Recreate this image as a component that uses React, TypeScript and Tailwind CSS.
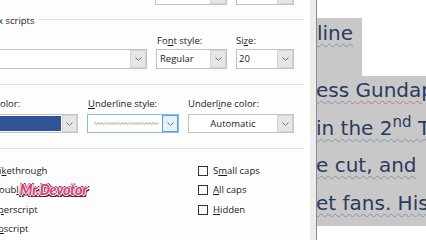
import type { ReactNode } from "react";

const Chevron = () => (
  <svg width="7" height="4" viewBox="0 0 7 4">
    <path d="M0.5 0.5 L3.5 3.5 L6.5 0.5" fill="none" stroke="#707070" strokeWidth="1" />
  </svg>
);

interface ComboProps {
  width: string;
  children?: ReactNode;
  cutLeft?: boolean;
  center?: boolean;
  active?: boolean;
}

function Combo({ width, children, cutLeft, center, active }: ComboProps) {
  return (
    <div
      className={`flex h-full ${width} border ${
        active ? "border-[#8fbbe8]" : "border-[#c2c2c2]"
      } ${cutLeft ? "border-l-0" : ""} bg-white`}
    >
      <div
        className={`flex flex-1 items-center overflow-hidden ${
          center ? "justify-center" : "pl-[2px]"
        }`}
      >
        {children}
      </div>
      <div
        className={`flex w-[16px] items-center justify-center border ${
          active ? "border-[#5a9fe0] bg-[#e5f1fb]" : "border-[#d4d4d4] bg-[#e6e6e6]"
        }`}
      >
        <Chevron />
      </div>
    </div>
  );
}

const U = ({ children }: { children: ReactNode }) => <span className="underline underline-offset-[1px]">{children}</span>;

// the wavy sample in the underline style box
function Wave() {
  let d = "M0 2.5";
  for (let i = 1; i <= 43; i++) d += ` L${i * 1.5} ${i % 2 ? 0.5 : 2.5}`;
  return (
    <svg width="65" height="3" viewBox="0 0 65 3">
      <path d={d} fill="none" stroke="#8a8a8a" strokeWidth="0.7" />
    </svg>
  );
}

function Check({ label }: { label: ReactNode }) {
  return (
    <div className="flex items-center">
      <div className="ml-[1px] h-[10px] w-[10px] border border-[#333]" />
      <span className="ml-[5px]">{label}</span>
    </div>
  );
}

function FontDialog() {
  return (
    <div className="flex w-[310px] shrink-0 flex-col bg-[#fdfdfd] text-[9.5px] leading-[14px] text-[#1b1b1b] font-['Open_Sans','Noto_Sans',sans-serif]">
      {/* latin text row, cut at the top */}
      <div className="-mt-[15px] flex h-[20px] shrink-0">
        <div className="w-[155px]" />
        <Combo width="w-[72px]">
          <span className="pl-[2px]">Bold</span>
        </Combo>
        <div className="w-[9px]" />
        <Combo width="w-[58px]">
          <span className="pl-[1px]">10</span>
        </Combo>
      </div>

      <div className="mt-[9px] flex h-[14px] shrink-0 items-center">
        <span className="-ml-[2px]">x scripts</span>
        <div className="mb-[3px] ml-[4px] mr-[6px] h-px flex-1 bg-[#e2e2e2]" />
      </div>

      <div className="mt-[6px] flex h-[14px] shrink-0">
        <div className="w-[157px]" />
        <div className="w-[79px]">
          Fo<U>n</U>t style:
        </div>
        <div>
          Si<U>z</U>e:
        </div>
      </div>

      <div className="mt-[1px] flex h-[20px] shrink-0">
        <Combo width="w-[147px]" cutLeft />
        <div className="w-[9px]" />
        <Combo width="w-[71px]">
          <span className="pl-[1px]">Regular</span>
        </Combo>
        <div className="w-[9px]" />
        <Combo width="w-[58px]">20</Combo>
      </div>

      <div className="mr-[6px] mt-[15px] h-px shrink-0 bg-[#e2e2e2]" />

      <div className="mt-[12px] flex h-[14px] shrink-0">
        <div className="w-[88px]">olor:</div>
        <div className="w-[100px]">
          <U>U</U>nderline style:
        </div>
        <div>
          Underl<U>i</U>ne color:
        </div>
      </div>

      <div className="mt-[3px] flex h-[19px] shrink-0">
        <div className="flex h-full w-[78px] border border-l-0 border-[#c2c2c2] bg-white">
          <div className="my-[1px] mr-[1px] flex-1 bg-[#2f5496]" />
          <div className="flex w-[15px] items-center justify-center border border-[#d4d4d4] bg-[#e6e6e6]">
            <Chevron />
          </div>
        </div>
        <div className="w-[9px]" />
        <Combo width="w-[92px]" active>
          <div className="flex pl-[4px]">
            <Wave />
          </div>
        </Combo>
        <div className="w-[9px]" />
        <Combo width="w-[106px]" center>
          Automatic
        </Combo>
      </div>

      <div className="mr-[6px] mt-[15px] h-px shrink-0 bg-[#e2e2e2]" />

      <div className="mt-[12px] flex shrink-0">
        <div className="flex w-[197px] flex-col">
          <div className="flex h-[19.5px] items-center">
            <span className="-ml-[1px]">
              i<U>k</U>ethrough
            </span>
          </div>
          <div className="flex h-[19.5px] items-center">
            <span className="-ml-[1px]">
              oub<U>l</U>
            </span>
            <span className="ml-[1px] text-[14.5px] leading-[14px] font-black italic tracking-[-0.3px] text-[#e2407a] font-['Lato',sans-serif] [text-shadow:1px_0_0_#fff,-1px_0_0_#fff,0_1px_0_#fff,0_-1px_0_#fff,1.5px_1.5px_0_#5e0d2b,-1px_1.5px_0_#5e0d2b,1.5px_-1px_0_#5e0d2b,-1px_-1px_0_#5e0d2b]">
              Mr.Devotor
            </span>
          </div>
          <div className="flex h-[19.5px] items-center">
            <span className="-ml-[2px]">
              <U>p</U>erscript
            </span>
          </div>
          <div className="flex h-[19.5px] items-center">
            <span className="-ml-[2px]">
              <U>b</U>script
            </span>
          </div>
        </div>
        <div className="flex flex-col">
          <div className="flex h-[19.5px] items-center">
            <Check label={<>S<U>m</U>all caps</>} />
          </div>
          <div className="flex h-[19.5px] items-center">
            <Check label={<><U>A</U>ll caps</>} />
          </div>
          <div className="flex h-[19.5px] items-center">
            <Check label={<><U>H</U>idden</>} />
          </div>
        </div>
      </div>
    </div>
  );
}

const wavy = "underline decoration-wavy decoration-[#8792aa] decoration-[0.5px] underline-offset-[3px]";

function Document() {
  return (
    <div className="flex flex-1 flex-col overflow-hidden whitespace-nowrap bg-white text-[20px] text-[#2b3a5e] font-['DejaVu_Sans',sans-serif]">
      <div className="h-[18px] shrink-0" />
      <div className="flex h-[58px] shrink-0">
        <div className="w-[45px] overflow-hidden bg-[#c8c8c8] pt-[3px] leading-[24px]">
          <span className={wavy}>line</span>
        </div>
        <div className="flex-1 bg-white" />
      </div>
      <div className="flex shrink-0 flex-col bg-[#c8c8c8]">
        <div className="h-[37.5px] overflow-hidden leading-[29px]">
          <span className={`-ml-[1px] ${wavy}`}>ess </span>
          <span className="underline decoration-wavy decoration-[#b87892] decoration-[0.5px] underline-offset-[3px]">
            Gundap
          </span>
        </div>
        <div className="h-[37.5px] overflow-hidden leading-[29px]">
          <span className={`-ml-[1px] ${wavy}`}>
            in the 2<sup>nd</sup> T
          </span>
        </div>
        <div className="h-[37.5px] overflow-hidden leading-[29px]">
          <span className={`-ml-[1px] ${wavy}`}>e cut, and</span>
        </div>
        <div className="h-[37.5px] overflow-hidden leading-[29px]">
          <span className={`-ml-[1px] ${wavy}`}>et fans. His</span>
        </div>
      </div>
      <div className="flex-1 bg-white" />
    </div>
  );
}

export default function App() {
  return (
    <div className="flex h-[240px] w-[426px] overflow-hidden bg-white">
      <FontDialog />
      <div className="w-[6px] shrink-0 bg-[#ececec]" />
      <div className="w-px shrink-0 bg-[#8a8a8a]" />
      <Document />
    </div>
  );
}
